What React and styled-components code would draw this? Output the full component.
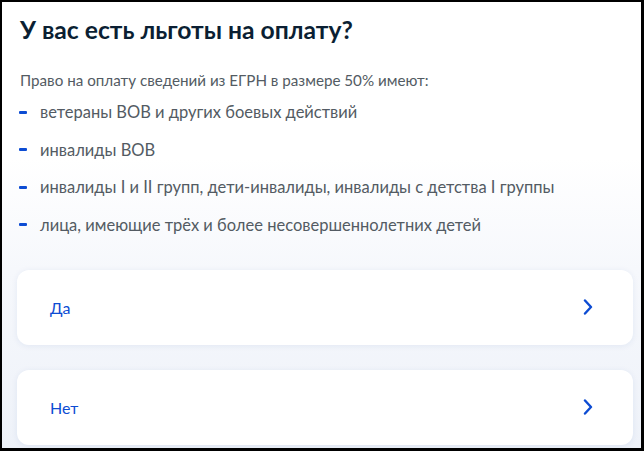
import React from 'react';
import styled, { createGlobalStyle } from 'styled-components';

const GlobalStyle = createGlobalStyle`
  html, body {
    margin: 0;
    padding: 0;
    background: #000;
  }
  * {
    box-sizing: border-box;
  }
`;

const Frame = styled.div`
  width: 644px;
  height: 451px;
  border-style: solid;
  border-color: #000;
  border-width: 2px 3px 3px 2px;
  overflow: hidden;
  font-family: Lato, "Noto Sans", sans-serif;
`;

const Panel = styled.section`
  height: 100%;
  padding: 12px 8px 0 15px;
  background: linear-gradient(180deg, #ffffff 0%, #ffffff 35%, #f6f8fc 60%, #eef2f9 100%);
`;

const Title = styled.h1`
  margin: 0 0 0 3px;
  font-size: 24.7px;
  line-height: 32px;
  font-weight: 700;
  color: #0b1f33;
`;

const Lead = styled.p`
  margin: 22px 0 0 3px;
  font-size: 15.2px;
  line-height: 24px;
  color: #535b63;
`;

const List = styled.ul`
  list-style: none;
  margin: 8px 0 0 2px;
  padding: 0;
  display: flex;
  flex-direction: column;
  gap: 13.5px;
`;

const Item = styled.li`
  display: flex;
  align-items: center;
  gap: 13px;
  font-size: 16.5px;
  line-height: 24px;
  color: #535b63;

  &::before {
    content: '';
    flex: none;
    width: 8px;
    height: 3px;
    border-radius: 1px;
    background: #0d4cd3;
  }
`;

const Options = styled.div`
  margin-top: 33px;
  display: flex;
  flex-direction: column;
  gap: 25px;
`;

const Option = styled.button`
  display: flex;
  align-items: center;
  justify-content: space-between;
  width: 100%;
  height: 75px;
  padding: 0 40px 0 33px;
  border: none;
  border-radius: 12px;
  background: #fff;
  box-shadow: 0 1px 6px rgba(30, 70, 150, 0.08);
  font-family: inherit;
  font-size: 16px;
  color: #0d4cd3;
  cursor: pointer;
  text-align: left;
`;

const Chevron = () => (
  <svg width="10" height="16" viewBox="0 0 10 16" fill="none">
    <path d="M2 1.5L8 8L2 14.5" stroke="#0d4cd3" strokeWidth="2.4" strokeLinecap="round" strokeLinejoin="round" />
  </svg>
);

const items = [
  'ветераны ВОВ и других боевых действий',
  'инвалиды ВОВ',
  'инвалиды I и II групп, дети-инвалиды, инвалиды с детства I группы',
  'лица, имеющие трёх и более несовершеннолетних детей',
];

export default function App() {
  return (
    <>
      <GlobalStyle />
      <Frame>
        <Panel>
          <Title>У вас есть льготы на оплату?</Title>
          <Lead>Право на оплату сведений из ЕГРН в размере 50% имеют:</Lead>
          <List>
            {items.map((text) => (
              <Item key={text}>{text}</Item>
            ))}
          </List>
          <Options>
            <Option>
              Да
              <Chevron />
            </Option>
            <Option>
              Нет
              <Chevron />
            </Option>
          </Options>
        </Panel>
      </Frame>
    </>
  );
}
